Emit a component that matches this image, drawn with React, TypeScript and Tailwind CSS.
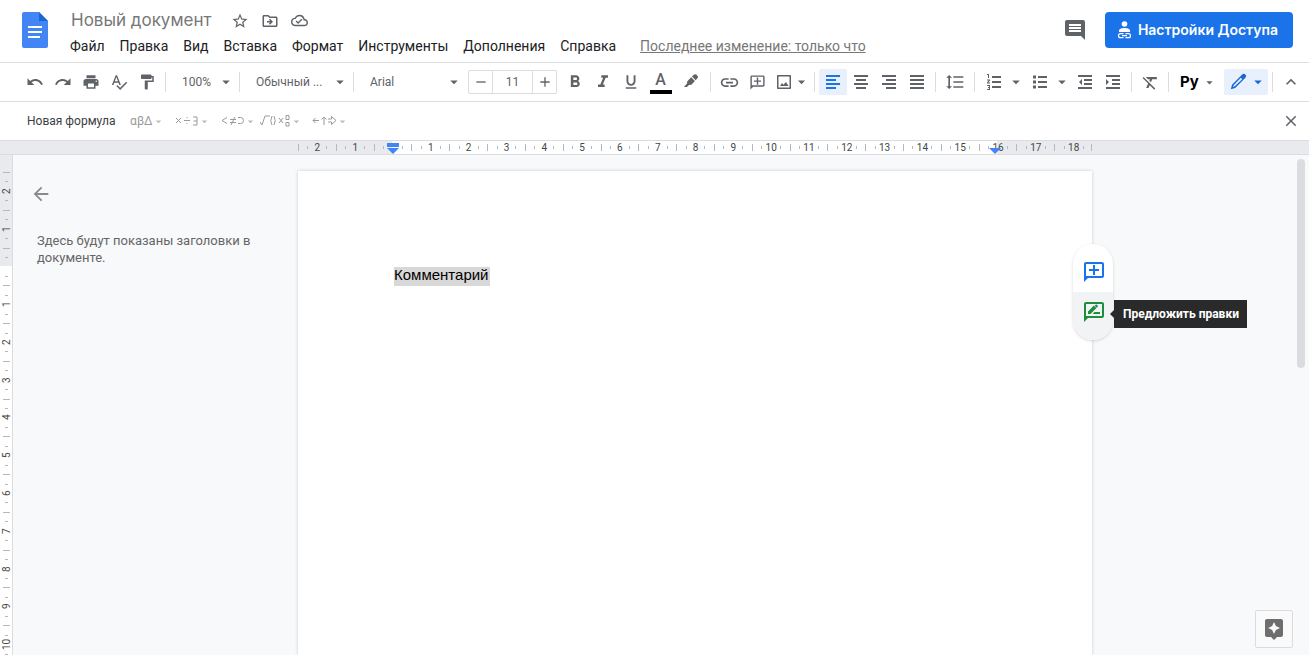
import type { ReactNode } from 'react';
import {
    MdAdd, MdArrowBack, MdArrowDropDown, MdAssistant, MdClose, MdExpandLess,
    MdFormatBold, MdFormatClear, MdFormatItalic, MdFormatLineSpacing,
    MdFormatPaint, MdFormatUnderlined, MdLink, MdOutlineCloudDone,
    MdOutlineDriveFileMove, MdPrint, MdRedo, MdRemove, MdSpellcheck,
    MdStarBorder, MdUndo,
} from 'react-icons/md';

const menus = ['Файл', 'Правка', 'Вид', 'Вставка', 'Формат', 'Инструменты', 'Дополнения', 'Справка'];

const icons = {
    left: 'M2 2h14v2H2zM2 6h10v2H2zM2 10h14v2H2zM2 14h10v2H2z',
    center: 'M2 2h14v2H2zM4 6h10v2H4zM2 10h14v2H2zM4 14h10v2H4z',
    right: 'M2 2h14v2H2zM6 6h10v2H6zM2 10h14v2H2zM6 14h10v2H6z',
    justify: 'M2 2h14v2H2zM2 6h14v2H2zM2 10h14v2H2zM2 14h14v2H2z',
    outdent: 'M2 2h14v2H2zM8 6h8v2H8zM8 10h8v2H8zM2 14h14v2H2zM6 6v6L3 9z',
    indent: 'M2 2h14v2H2zM8 6h8v2H8zM8 10h8v2H8zM2 14h14v2H2zM2 6v6l3-3z',
    bullets: 'M7 3h9v2H7zM7 8h9v2H7zM7 13h9v2H7zM2 2.500h3v3H2zM2 7.500h3v3H2zM2 12.500h3v3H2z',
    numbers: 'M7 3h9v2H7zM7 8h9v2H7zM7 13h9v2H7zM2 1h2v4H3V2H2zM2 6.500h3v1L3.300 9.500H5v1H2v-1l1.700-2H2zM2 12h3v5H2v-1h2v-.9H3v-1h1V13H2z',
    pencil: 'M13.200 1.600a2 2 0 0 1 3.200 3.200L6.200 15l-4.400 1.200L3 11.800zM11.800 4.800 4.700 12.300l-.7 1.700 1.700-.7L13.200 6.200z',
};

const Icon = ({ name }: { name: keyof typeof icons }) => (
    <svg className="shrink-0" width="18" height="18" viewBox="0 0 18 18" fill="currentColor">
        <path fillRule="evenodd" d={icons[name]} />
    </svg>
);

interface ToolProps {
    label: string;
    className?: string;
    children: ReactNode;
}

const Tool: React.FC<ToolProps> = ({ label, className = 'w-7', children }) => (
    <button aria-label={label} className={`flex h-[26px] shrink-0 items-center justify-center rounded-xs ${className}`}>
        {children}
    </button>
);

const DropTool: React.FC<ToolProps> = ({ label, className = 'w-[46px] gap-1 pl-[6px]', children }) => (
    <button aria-label={label} className={`flex h-[26px] shrink-0 items-center rounded-xs ${className}`}>
        {children}
        <MdArrowDropDown size={18} />
    </button>
);

const Sep = () => <div className="mx-1 h-5 w-px shrink-0 bg-[#dadce0]" />;

interface PickerProps {
    label: string;
    value: string;
    className: string;
}

const Picker: React.FC<PickerProps> = ({ label, value, className }) => (
    <label className={`relative shrink-0 ${className}`}>
        <select aria-label={label} className="h-[26px] w-full appearance-none pl-3 text-xs outline-none">
            <option>{value}</option>
        </select>
        <MdArrowDropDown size={18} className="pointer-events-none absolute right-0 top-1" />
    </label>
);

const AddCommentIcon = ({ size }: { size: number }) => (
    <svg width={size} height={size} viewBox="0 0 24 24" fill="currentColor">
        <path d="M20 2H4c-1.100 0-2 .9-2 2v18l4-4h14c1.100 0 2-.9 2-2V4c0-1.100-.9-2-2-2zm0 14H4V4h16v12zM11 15h2v-4h4V9h-4V5h-2v4H7v2h4z" />
    </svg>
);

const SuggestIcon = ({ size }: { size: number }) => (
    <svg width={size} height={size} viewBox="0 0 24 24" fill="currentColor">
        <path d="M20 2H4c-1.100 0-2 .9-2 2v18l4-4h14c1.100 0 2-.9 2-2V4c0-1.100-.9-2-2-2zm0 14H4V4h16v12z" />
        <path d="M6 14h2.500l5.900-5.900-2.500-2.500L6 11.500zM15.900 6.600c.2-.2.200-.5 0-.7l-1.300-1.300c-.2-.2-.5-.2-.7 0l-1.100 1.100 2 2zM18 14v-2h-5.500l-2 2z" />
    </svg>
);

// one cell is a centimetre, from half before the mark to half after it
const HRuler = () => {
    const cells = [];
    for (let i = -2; i <= 18; i++) {
        let bg = 'bg-white';
        if (i < 0 || i > 16) bg = 'bg-[#e8eaed]';
        if (i === 0) bg = 'bg-linear-to-r from-[#e8eaed] from-50% to-white to-50%';
        if (i === 16) bg = 'bg-linear-to-r from-white from-50% to-[#e8eaed] to-50%';
        cells.push(
            <div key={i} className={`flex h-full flex-1 items-center justify-between ${bg}`}>
                <span className="h-[7px] w-px bg-[#b5b8bc]" />
                <span className="h-[3px] w-px bg-[#b5b8bc]" />
                <span className="flex w-px justify-center whitespace-nowrap">{i === 0 ? '' : Math.abs(i)}</span>
                <span className="h-[3px] w-px bg-[#b5b8bc]" />
                <span />
            </div>
        );
    }
    return (
        <div className="flex h-[15px] shrink-0 border-y border-[#dadce0] bg-[#e8eaed] text-[10px] text-[#444746]">
            <div className="w-[298px] shrink-0" />
            <div className="relative flex w-[794px] shrink-0 items-center">
                {cells}
                <span className="absolute right-0 h-[7px] w-px bg-[#b5b8bc]" />
                <svg className="absolute left-[89px] top-px" width="12" height="12" viewBox="0 0 12 12" fill="#4285f4">
                    <path d="M0 1h12v4H0zM0 6h12L6 12z" />
                </svg>
                <svg className="absolute left-[691px] top-px" width="12" height="12" viewBox="0 0 12 12" fill="#4285f4">
                    <path d="M0 6h12L6 12z" />
                </svg>
            </div>
        </div>
    );
};

const VRuler = () => {
    const cells = [];
    for (let i = -2; i <= 10; i++) {
        let bg = 'bg-white';
        if (i < 0) bg = 'bg-[#e8eaed]';
        if (i === 0) bg = 'bg-linear-to-b from-[#e8eaed] from-50% to-white to-50%';
        cells.push(
            <div key={i} className={`flex min-h-0 w-full flex-1 flex-col items-center justify-between ${bg}`}>
                <span className="h-px w-[7px] bg-[#b5b8bc]" />
                <span className="h-px w-[3px] bg-[#b5b8bc]" />
                <span className="flex h-px rotate-180 items-center justify-center whitespace-nowrap [writing-mode:vertical-rl]">
                    <span>{i === 0 ? '' : Math.abs(i)}</span>
                </span>
                <span className="h-px w-[3px] bg-[#b5b8bc]" />
                <span />
            </div>
        );
    }
    return (
        <div className="flex w-[13px] shrink-0 flex-col overflow-hidden border-r border-[#dadce0] bg-white text-[10px] text-[#444746]">
            <div className="h-[17px] w-full shrink-0 bg-[#e8eaed]" />
            <div className="flex h-[491px] shrink-0 flex-col">{cells}</div>
        </div>
    );
};

const Header = () => (
    <header className="flex h-[63px] shrink-0 items-start border-b border-[#dadce0]">
        <svg className="ml-[22px] mt-3 shrink-0" width="26" height="36" viewBox="0 0 26 36">
            <path d="M2 0h15l9 9v25a2 2 0 0 1-2 2H2a2 2 0 0 1-2-2V2a2 2 0 0 1 2-2z" fill="#4285f4" />
            <path d="M17 0l9 9h-9z" fill="#1967d2" />
            <path d="M6 14h14v2H6zM6 19h14v2H6zM6 24h12v2H6z" fill="#fff" />
        </svg>
        <div className="ml-[15px] flex flex-col">
            <div className="flex h-9 items-center gap-3 pl-2 pt-[5px] text-[#5f6368]">
                <h1 className="mr-2 font-['Inter',sans-serif] text-[17px] text-[#777]">Новый документ</h1>
                <button aria-label="Пометить"><MdStarBorder size={18} /></button>
                <button aria-label="Переместить"><MdOutlineDriveFileMove size={18} /></button>
                <button aria-label="Статус документа"><MdOutlineCloudDone size={17} /></button>
            </div>
            <nav className="flex h-5 items-center gap-px text-sm whitespace-nowrap text-[#202124]">
                {menus.map((menu) => (
                    <button key={menu} className="px-[7px]">{menu}</button>
                ))}
                <a href="#history" className="ml-4 text-sm text-[#777] underline">Последнее изменение: только что</a>
            </nav>
        </div>
        <div className="ml-auto mr-4 mt-3 flex items-center gap-[18px]">
            <button aria-label="История комментариев" className="text-[#5f6368]">
                <svg width="24" height="24" viewBox="0 0 24 24" fill="currentColor">
                    <path d="M22 4c0-1.100-.9-2-2-2H4c-1.100 0-2 .9-2 2v12c0 1.100.9 2 2 2h14l4 4V4zm-4 10H6v-2h12v2zm0-3H6V9h12v2zm0-3H6V6h12v2z" />
                </svg>
            </button>
            <button className="flex h-9 items-center gap-[6px] rounded-sm bg-[#1a73e8] pl-3 pr-[15px] font-['Inter',sans-serif] text-sm font-semibold whitespace-nowrap text-white">
                <svg width="15" height="18" viewBox="0 0 15 18" fill="none">
                    <circle cx="7.500" cy="3" r="2.800" fill="#fff" />
                    <path d="M2 11V9.800C2 7.800 4.800 7 7.500 7s5.500.8 5.500 2.800V11z" fill="#fff" />
                    <path d="M6.500 12.700H3.500a2 2 0 0 0 0 4h3M8.500 12.700h3a2 2 0 0 1 0 4h-3M5 14.700h5" stroke="#fff" strokeWidth="1.200" />
                </svg>
                Настройки Доступа
            </button>
        </div>
    </header>
);

const Toolbar = () => (
    <div className="flex h-[39px] shrink-0 items-center border-b border-[#dadce0] pl-[21px] pr-1 text-[#5f6368]">
        <Tool label="Отменить"><MdUndo size={18} /></Tool>
        <Tool label="Повторить"><MdRedo size={18} /></Tool>
        <Tool label="Печать"><MdPrint size={18} /></Tool>
        <Tool label="Правописание"><MdSpellcheck size={18} /></Tool>
        <Tool label="Копировать форматирование"><MdFormatPaint size={18} /></Tool>
        <Sep />
        <Picker label="Масштаб" value="100%" className="w-[65px]" />
        <Sep />
        <Picker label="Стили" value="Обычный ..." className="w-[105px]" />
        <Sep />
        <Picker label="Шрифт" value="Arial" className="w-[105px]" />
        <div className="ml-[5px] mr-1 flex h-6 w-[89px] shrink-0 rounded-xs border border-[#dadce0]">
            <button aria-label="Уменьшить размер" className="flex flex-1 items-center justify-center"><MdRemove size={16} /></button>
            <input aria-label="Размер шрифта" defaultValue="11" className="w-[41px] border-x border-[#dadce0] text-center text-xs outline-none" />
            <button aria-label="Увеличить размер" className="flex flex-1 items-center justify-center"><MdAdd size={16} /></button>
        </div>
        <Tool label="Полужирный"><MdFormatBold size={20} /></Tool>
        <Tool label="Курсив"><MdFormatItalic size={20} /></Tool>
        <Tool label="Подчеркнутый"><MdFormatUnderlined size={18} /></Tool>
        <Tool label="Цвет текста" className="w-[31px]">
            <span className="flex h-6 w-[22px] flex-col items-center justify-between border-b-4 border-black text-base font-medium">
                <span className="leading-5">A</span>
            </span>
        </Tool>
        <Tool label="Цвет выделения" className="w-[30px]">
            <svg width="16" height="16" viewBox="0 0 16 16" fill="currentColor">
                <path d="M9 2.500 11.200.6a1.500 1.500 0 0 1 2 0l1.400 1.400a1.500 1.500 0 0 1 0 2L12.700 6.200zM8.200 3.300l3.700 3.700-3 3.200c-.7.800-1.800 1-2.700.6L4 13H1l3.200-3.800c-.3-.9-.1-1.800.6-2.500z" />
            </svg>
        </Tool>
        <Sep />
        <Tool label="Вставить ссылку"><MdLink size={21} /></Tool>
        <Tool label="Добавить комментарий"><AddCommentIcon size={17} /></Tool>
        <DropTool label="Вставить изображение" className="w-[39px] pl-1">
            <svg className="shrink-0" width="18" height="18" viewBox="0 0 18 18" fill="currentColor">
                <path fillRule="evenodd" d="M3 2h12c.6 0 1 .4 1 1v12c0 .6-.4 1-1 1H3c-.6 0-1-.4-1-1V3c0-.6.400-1 1-1zm.5 1.500v11h11v-11zM5 13l2-3 1.500 1.800L11 9l2.500 4z" />
            </svg>
        </DropTool>
        <Sep />
        <Tool label="По левому краю" className="w-7 bg-[#e8f0fe] text-[#1a73e8]"><Icon name="left" /></Tool>
        <Tool label="По центру"><Icon name="center" /></Tool>
        <Tool label="По правому краю"><Icon name="right" /></Tool>
        <Tool label="По ширине"><Icon name="justify" /></Tool>
        <Sep />
        <Tool label="Межстрочный интервал" className="w-[30px]"><MdFormatLineSpacing size={20} /></Tool>
        <Sep />
        <DropTool label="Нумерованный список"><Icon name="numbers" /></DropTool>
        <DropTool label="Маркированный список"><Icon name="bullets" /></DropTool>
        <Tool label="Уменьшить отступ"><Icon name="outdent" /></Tool>
        <Tool label="Увеличить отступ"><Icon name="indent" /></Tool>
        <Sep />
        <Tool label="Очистить форматирование"><MdFormatClear size={19} /></Tool>
        <Sep />
        <button aria-label="Методы ввода" className="flex h-[26px] w-[46px] shrink-0 items-center gap-[3px] pl-[7px]">
            <span className="font-['Inter',sans-serif] text-[15px] font-bold text-black">Ру</span>
            <MdArrowDropDown size={15} />
        </button>
        <DropTool label="Режим редактирования" className="ml-auto w-11 gap-[2px] bg-[#e8f0fe] pl-[5px] text-[#1967d2]">
            <Icon name="pencil" />
        </DropTool>
        <Sep />
        <Tool label="Скрыть меню"><MdExpandLess size={20} /></Tool>
    </div>
);

// stroke drawings of the operator groups, null keeps the letters as text
const formulaGroups = [
    { label: 'Греческие буквы', d: null, width: 24 },
    { label: 'Прочие операторы', d: 'M1 3l5 5M6 3L1 8M9 5.500h6M12 2v1M12 8v1M18 2h4v8h-4M18.500 6H22', width: 23 },
    { label: 'Отношения', d: 'M6 2.500l-5 3 5 3M9 4.500h6M9 7.500h6M14 2l-4 8M17 2.500h2.500a3 3 0 0 1 0 6H17', width: 23 },
    { label: 'Математика', d: 'M0 7l2 3 3-9h5M12 1q-2.500 5 0 9M14 1q2.500 5 0 9M19 3l4 5M23 3l-4 5M26 .5h3v4h-3zM26 7.500h3v3.500h-3z', width: 30 },
    { label: 'Стрелки', d: 'M1 5.500h6M3.500 3L1 5.500 3.500 8M12 10V2M9.500 4.500L12 2l2.500 2.500M16 4h3.500V1.500L24 5.500 19.500 9.500V7H16', width: 24 },
];

const FormulaBar = () => (
    <div className="flex h-[38px] shrink-0 items-center pl-[27px] pr-[9px]">
        <button className="mr-[13px] text-xs text-[#3c4043]">Новая формула</button>
        {formulaGroups.map(({ label, d, width }) => (
            <button key={label} aria-label={label} className="flex w-[46px] shrink-0 items-center text-xs whitespace-nowrap text-[#9a9a9a]">
                <span className="flex w-6 justify-end">
                    {d ? (
                        <svg className="shrink-0" width={width} height="12" viewBox={`0 0 ${width} 12`} fill="none" stroke="currentColor">
                            <path d={d} />
                        </svg>
                    ) : 'αβΔ'}
                </span>
                <MdArrowDropDown size={13} className="mt-px text-[#bbb]" />
            </button>
        ))}
        <button aria-label="Закрыть" className="ml-auto text-[#5f6368]"><MdClose size={18} /></button>
    </div>
);

export default function App() {
    return (
        <div className="flex h-screen flex-col overflow-hidden bg-white font-['Roboto',sans-serif]">
            <Header />
            <Toolbar />
            <FormulaBar />
            <HRuler />
            <div className="flex min-h-0 flex-1 bg-[#f8f9fb]">
                <VRuler />
                <aside className="w-[285px] shrink-0 pl-[17px] pt-7">
                    <button aria-label="Закрыть структуру" className="block text-[#8a8a8a]"><MdArrowBack size={22} /></button>
                    <p className="ml-[7px] mr-6 mt-[27px] text-[13px] leading-[17px] text-[#666]">Здесь будут показаны заголовки в документе.</p>
                </aside>
                <main className="relative mt-4 w-[794px] shrink-0 bg-white pl-24 pt-24 shadow-[0_0_3px_rgba(60,64,67,0.25)]">
                    <p className="font-['Liberation_Sans',sans-serif] text-[15px] leading-[15px] text-black">
                        <span className="inline-block bg-[#d8d8d8] pb-1 pr-[2px]">Комментарий</span>
                    </p>
                    <div className="absolute -right-[21px] top-[73px] flex h-24 w-10 flex-col overflow-hidden rounded-full bg-white shadow-[0_1px_3px_rgba(60,64,67,0.2)]">
                        <button aria-label="Добавить комментарий" className="flex h-12 items-center justify-center pt-2 pl-px text-[#1a73e8]"><AddCommentIcon size={24} /></button>
                        <button aria-label="Предложить правки" className="flex h-12 items-start justify-center bg-[#f1f3f4] pt-2 pl-px text-[#1e8e3e]"><SuggestIcon size={24} /></button>
                    </div>
                    <div role="tooltip" className="absolute left-[816px] top-[129px] flex h-7 items-center bg-[#2a2a2a] pl-[9px] pr-2 text-xs font-bold whitespace-nowrap text-white">
                        <span className="absolute -left-1 top-[9px] border-y-[5px] border-r-[5px] border-y-transparent border-r-[#2a2a2a]" />
                        Предложить правки
                    </div>
                </main>
                <div className="flex min-w-0 flex-1 items-start justify-end pt-1">
                    <button aria-label="Анализ данных" className="mb-[7px] mr-1 flex size-[38px] items-center justify-center self-end rounded-xs border border-[#dadce0] bg-[#fafafa] text-[#6e6e6e]"><MdAssistant size={24} /></button>
                    <div className="mr-1 h-[209px] w-2 rounded-full bg-[#dadce0]" />
                </div>
            </div>
        </div>
    );
}
